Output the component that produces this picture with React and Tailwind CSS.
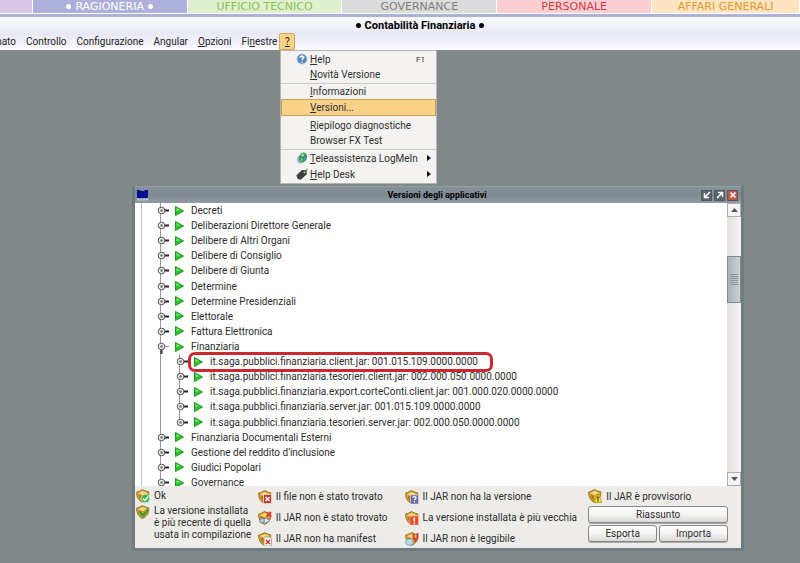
import React from "react";

const tabs = [
  { label: "", style: "grow-[32] bg-[#d9c6e2]" },
  { label: "RAGIONERIA", active: true, style: "grow-[155] bg-[#adb0da] text-white" },
  { label: "UFFICIO TECNICO", style: "grow-[155] bg-[#e0efd0] text-[#8cc152]" },
  { label: "GOVERNANCE", style: "grow-[155] bg-[#dcdcdc] text-[#7c7c7c]" },
  { label: "PERSONALE", style: "grow-[155] bg-[#fbcfd2] text-[#cf3a48]" },
  { label: "AFFARI GENERALI", style: "grow-[148] bg-[#fde4c2] text-[#e39a2d]" },
];

const tree = [
  { label: "Decreti" },
  { label: "Deliberazioni Direttore Generale" },
  { label: "Delibere di Altri Organi" },
  { label: "Delibere di Consiglio" },
  { label: "Delibere di Giunta" },
  { label: "Determine" },
  { label: "Determine Presidenziali" },
  { label: "Elettorale" },
  { label: "Fattura Elettronica" },
  { label: "Finanziaria", open: true },
  { label: "it.saga.pubblici.finanziaria.client.jar: 001.015.109.0000.0000", child: true, marked: true },
  { label: "it.saga.pubblici.finanziaria.tesorieri.client.jar: 002.000.050.0000.0000", child: true },
  { label: "it.saga.pubblici.finanziaria.export.corteConti.client.jar: 001.000.020.0000.0000", child: true },
  { label: "it.saga.pubblici.finanziaria.server.jar: 001.015.109.0000.0000", child: true },
  { label: "it.saga.pubblici.finanziaria.tesorieri.server.jar: 002.000.050.0000.0000", child: true, last: true },
  { label: "Finanziaria Documentali Esterni" },
  { label: "Gestione del reddito d'inclusione" },
  { label: "Giudici Popolari" },
  { label: "Governance" },
];

function Key({ children }) {
  return <span className="underline decoration-1 underline-offset-1">{children}</span>;
}

function Dot() {
  return <span className="size-[5px] rounded-full bg-current" />;
}

function HelpIcon() {
  return (
    <svg className="size-3" viewBox="0 0 12 12" aria-hidden="true">
      <circle cx="6" cy="6" r="5" fill="#4f86c0" stroke="#a9c4e0" />
      <path d="M2.500 4.500a4 4 0 0 1 7 0Q6 5.500 2.500 4.500z" fill="#8db8e2" />
      <path d="M4.400 4.600c0-2.200 3.400-2 3.200 0C7.500 5.800 6 5.600 6 7.200" fill="none" stroke="#fff" strokeWidth="1.300" />
      <circle cx="6" cy="9" r=".8" fill="#fff" />
    </svg>
  );
}

function RemoteIcon() {
  return (
    <svg className="size-3" viewBox="0 0 12 12" aria-hidden="true">
      <ellipse cx="4.500" cy="7.500" rx="3.500" ry="4" fill="#9db6cf" />
      <ellipse cx="7" cy="5.500" rx="4" ry="5" fill="#3c9a56" transform="rotate(20 7 5.500)" />
      <path d="M5 3c1.500-2 3-1.500 3.500-.5L7 5zM4.500 6l2 1-.5 3z" fill="#a8dbb4" />
      <path d="M8.500 4.500l1.500 1-1 3.500-1-1z" fill="#5c8fc4" />
    </svg>
  );
}

function TagIcon() {
  return (
    <svg className="size-3" viewBox="0 0 12 12" aria-hidden="true">
      <path d="M.3 7.500 6 2l4.500.2.300 4L4.800 11.800 1.800 11z" fill="#3d3d3d" />
      <circle cx="8.500" cy="4.300" r=".9" fill="#f3f2ef" />
      <path d="M8.500 4.300 11.500.8" stroke="#555" fill="none" />
    </svg>
  );
}

function Arrow() {
  return (
    <svg className="mr-1 h-[6px] w-1" viewBox="0 0 4 6" aria-hidden="true">
      <path d="M0 0 4 3 0 6z" fill="#111" />
    </svg>
  );
}

function MenuItem({ icon, hint, className = "h-4 border-transparent", children }) {
  return (
    <button role="menuitem" className={"flex w-full items-center border text-left " + className}>
      <span className="flex w-7 justify-end pr-[2px]">{icon}</span>
      <span className="grow">{children}</span>
      {hint}
    </button>
  );
}

function Menu() {
  return (
    <div role="menu" className="absolute left-[280px] top-full z-10 flex w-[157px] flex-col border border-[#b5b5b2] bg-[#f4f3f1] pb-px text-[#2f2f2f]">
      <MenuItem icon={<HelpIcon />} hint={<span className="pr-[10px] text-[8px]">F1</span>}><Key>H</Key>elp</MenuItem>
      <MenuItem className="h-[15px] border-transparent"><Key>N</Key>ovità Versione</MenuItem>
      <hr className="mt-px border-[#c9c9c6]" />
      <MenuItem className="h-[15px] border-transparent"><Key>I</Key>nformazioni</MenuItem>
      <MenuItem className="mb-[2px] h-[17px] border-[#c9a052] bg-[#f9d38a]"><Key>V</Key>ersioni...</MenuItem>
      <MenuItem className="h-[15px] border-transparent"><Key>R</Key>iepilogo diagnostiche</MenuItem>
      <MenuItem className="h-[15px] border-transparent">Browser FX Test</MenuItem>
      <hr className="mt-px border-[#c9c9c6]" />
      <MenuItem icon={<RemoteIcon />} hint={<Arrow />}><Key>T</Key>eleassistenza LogMeIn</MenuItem>
      <MenuItem icon={<TagIcon />} hint={<Arrow />}><Key>H</Key>elp Desk</MenuItem>
    </div>
  );
}

function Handle({ open }) {
  return (
    <svg className="h-[15px] w-3 shrink-0" viewBox="0 0 12 15" aria-hidden="true">
      {open ? <path d="M4.500 8v7" stroke="#333" strokeWidth="2" /> : <path d="M4 7.500h8" stroke="#222" strokeWidth="2" />}
      {open && <path d="M7 7.500h5" stroke="#999" />}
      <circle cx="4.500" cy="7.500" r="3.300" fill="#e8e8e8" stroke="#555" />
      <circle cx="4.500" cy="7.500" r="1.300" fill="#777" />
    </svg>
  );
}

function Play() {
  return (
    <svg className="h-[10px] w-[9px] shrink-0" viewBox="0 0 9 10" aria-hidden="true">
      <path d="M.5.5 8.500 5 .5 9.500z" fill="#2fc02f" stroke="#1f9a1f" />
      <path d="M1.500 2 5 4.200 1.500 5z" fill="#7fe67f" />
    </svg>
  );
}

function TreeRow({ item }) {
  return (
    <li className="relative flex min-h-0 flex-1 items-center whitespace-nowrap">
      <span className="flex w-[15px] shrink-0 justify-end self-stretch">
        <span className="-mr-1 w-px bg-[#9a9a9a]" />
      </span>
      {item.child && (
        <span className="flex w-[19px] shrink-0 justify-end self-stretch">
          <span className={item.last ? "-mr-1 h-2 w-px bg-[#9a9a9a]" : "-mr-1 w-px bg-[#9a9a9a]"} />
        </span>
      )}
      <span className="z-[1] flex items-center">
        <Handle open={item.open} />
        <span className="ml-[6px] mr-[7px] flex"><Play /></span>
        <span>{item.label}</span>
      </span>
      {item.marked && (
        <span className="absolute -top-[2px] left-[46px] z-[2] h-5 w-[305px] rounded-[7px] border-[3px] border-[#cc2830]" />
      )}
    </li>
  );
}

function Badge({ kind }) {
  return (
    <>
      {kind === "ok" && (<><circle cx="9.500" cy="9.500" r="4.300" fill="#3bb54a" stroke="#e4f5e4" strokeWidth=".7" /><path d="M7 9.500l2 2 3.300-4" fill="none" stroke="#fff" strokeWidth="1.500" /></>)}
      {kind === "newer" && <path d="M4 7l3 3.500L12 4.500" fill="none" stroke="#3f9d2f" strokeWidth="2.500" />}
      {kind === "nofile" && (<><rect x="5.500" y="4.500" width="8" height="9" fill="#cf3029" stroke="#fff" strokeWidth=".6" /><path d="M7.500 7l4 4M11.500 7l-4 4" stroke="#fff" strokeWidth="1.600" /></>)}
      {kind === "nojar" && (<><path d="M3 9l4 3.500 5-3-4-2.500z" fill="#e2e6ea" stroke="#74838f" /><circle cx="4" cy="9.500" r="2.500" fill="#b7c8d6" stroke="#65727d" strokeWidth=".8" /><path d="M9 1l4 5M13 1 8.500 5.500" stroke="#e0392c" strokeWidth="1.800" /></>)}
      {kind === "nomanifest" && (<><path d="M6 5h6l1.500 1.500V14H6z" fill="#f3f3f3" stroke="#999" strokeWidth=".7" /><path d="M8 8l4 4M12 8l-4 4" stroke="#d5382b" strokeWidth="1.500" /></>)}
      {kind === "unknown" && (<><rect x="5.500" y="5" width="8" height="9" fill="#6a6cab" stroke="#d9daf0" strokeWidth=".6" /><path d="M8 7.800c0-1.700 3.200-1.500 3 .2-.1 1-1.500.9-1.500 2.200M9.500 11.300v1.200" fill="none" stroke="#fff" strokeWidth="1.200" /></>)}
      {kind === "older" && (<><rect x="5" y="5" width="8.500" height="9" fill="#ea4a25" stroke="#f9c5b5" strokeWidth=".6" /><path d="M9.300 6.500v4M9.300 11.500v1.500" stroke="#fff" strokeWidth="1.600" /></>)}
      {kind === "unreadable" && (<><rect x="1" y="7" width="7" height="6" rx="2" fill="#b9dcea" stroke="#6b98ad" strokeWidth=".8" /><path d="M8.500 1v4.500c0 2 4 2 4 0V1M10.500 7v3" fill="none" stroke="#d8362b" strokeWidth="1.700" /></>)}
      {kind === "draft" && (<><path d="M10 4.500l4 9H6z" fill="#f6e01e" stroke="#a98f10" strokeWidth=".7" /><path d="M10 7.500v3M10 11.300v1.200" stroke="#222" strokeWidth="1.200" /></>)}
    </>
  );
}

function Jar({ kind }) {
  return (
    <svg className="size-[14px] shrink-0" viewBox="0 0 14 14" aria-hidden="true">
      <path d="M.7 3C3 2.800 4.500 1.500 6.500.6c2 .9 4 2 6.300 2.300.3 4.800-1.500 8.500-6.300 10.500C2.500 11.700.5 8 .7 3z" fill="#d9a437" stroke="#93661a" strokeWidth=".9" />
      <path d="M2.300 4.200 6.500 2 11.300 4 6.500 6z" fill="#f6d984" />
      <path d="M2.600 5.200l3.200 1.300v5c-2-1-3.200-3-3.200-6.300z" fill="#b07c22" />
      <Badge kind={kind} />
    </svg>
  );
}

function Legend({ kind, children }) {
  return (
    <div className="flex h-[21px] items-center gap-1 whitespace-nowrap">
      <Jar kind={kind} />
      <span>{children}</span>
    </div>
  );
}

const winButton = "flex size-[11px] items-center justify-center border border-[#4f5a60] text-white";
const pushButton = "flex h-[17px] items-center justify-center rounded-[3px] border border-[#85878a] bg-linear-to-b from-white via-[#f6f5f3] to-[#d9d8d5] shadow-[0_1px_0_#aaa]";
const scrollButton = "flex h-[14px] items-center justify-center border border-[#a9adaf] bg-[#f6f5f3]";

function VersionWindow() {
  return (
    <section className="absolute left-[132px] top-[186px] w-[612px] border-x-[3px] border-b-[3px] border-[#6f7d83] bg-[#edece9] text-[#2c2c2c]">
      <header className="flex h-[17px] items-center border-t border-[#95a0a6] bg-linear-to-b from-[#87929a] via-[#7f8b91] to-[#919ca2] pl-[2px] pr-[3px]">
        <svg className="h-3 w-[11px]" viewBox="0 0 11 12" aria-hidden="true">
          <path d="M0 1h3l1 1h3l1-1h3v8H0z" fill="#08108c" />
          <path d="M0 10.500h11" stroke="#c7cbe8" strokeWidth="2" strokeDasharray="2 1" />
        </svg>
        <h2 className="grow pl-[25px] text-center text-[9px] font-bold text-black">Versioni degli applicativi</h2>
        <div className="flex gap-[2px]">
          <button aria-label="Riduci" className={winButton + " bg-[#59646b]"}>
            <svg className="size-2" viewBox="0 0 8 8"><path d="M7 1 2 6M1.500 2v4.500H6" fill="none" stroke="currentColor" strokeWidth="1.500" /></svg>
          </button>
          <button aria-label="Ingrandisci" className={winButton + " bg-[#59646b]"}>
            <svg className="size-2" viewBox="0 0 8 8"><path d="M1 7 6 2M2 1.500h4.500V6" fill="none" stroke="currentColor" strokeWidth="1.500" /></svg>
          </button>
          <button aria-label="Chiudi" className={winButton + " bg-[#c0573f]"}>
            <svg className="size-2" viewBox="0 0 8 8"><path d="M1.500 1.500l5 5M6.500 1.500l-5 5" stroke="currentColor" strokeWidth="1.700" /></svg>
          </button>
        </div>
      </header>
      <div className="flex h-[283px] bg-white">
        <div className="flex grow overflow-hidden pl-[6px]">
          <ul className="flex h-[287px] grow flex-col border-l border-[#c0c0c0]">
            {tree.map((item) => (
              <TreeRow key={item.label} item={item} />
            ))}
          </ul>
        </div>
        <div className="flex w-[14px] flex-col bg-linear-to-r from-[#e2e1de] to-[#f6f5f3]">
          <button aria-label="Su" className={scrollButton}>
            <svg className="h-1 w-[7px]" viewBox="0 0 7 4"><path d="M0 4 3.500 0 7 4z" fill="#555" /></svg>
          </button>
          <div className="mt-[39px] flex h-[47px] flex-col items-center justify-center gap-px border border-[#7c898f] bg-linear-to-r from-[#a9b4ba] to-[#c8d1d6]">
            {[0, 1, 2, 3, 4, 5].map((n) => (
              <i key={n} className="h-px w-2 border-t border-[#8997a0]" />
            ))}
          </div>
          <button aria-label="Giù" className={scrollButton + " mt-auto"}>
            <svg className="h-1 w-[7px]" viewBox="0 0 7 4"><path d="M0 0 3.500 4 7 0z" fill="#555" /></svg>
          </button>
        </div>
      </div>
      <footer className="grid h-[62px] grid-cols-[122fr_147fr_184fr_153fr] pl-px">
        <div className="flex flex-col">
          <div className="flex h-[19px] items-center gap-1"><Jar kind="ok" /><span>Ok</span></div>
          <div className="flex gap-1 leading-3">
            <Jar kind="newer" />
            <span className="whitespace-nowrap">La versione installata<br />è più recente di quella<br />usata in compilazione</span>
          </div>
        </div>
        <div>
          <Legend kind="nofile">Il file non è stato trovato</Legend>
          <Legend kind="nojar">Il JAR non è stato trovato</Legend>
          <Legend kind="nomanifest">Il JAR non ha manifest</Legend>
        </div>
        <div>
          <Legend kind="unknown">Il JAR non ha la versione</Legend>
          <Legend kind="older">La versione installata è più vecchia</Legend>
          <Legend kind="unreadable">Il JAR non è leggibile</Legend>
        </div>
        <div className="pr-[13px]">
          <div className="flex h-5 items-center gap-1"><Jar kind="draft" /><span>Il JAR è provvisorio</span></div>
          <div className="grid grid-cols-2 gap-[2px]">
            <button className={pushButton + " col-span-2"}>Riassunto</button>
            <button className={pushButton}>Esporta</button>
            <button className={pushButton}>Importa</button>
          </div>
        </div>
      </footer>
    </section>
  );
}

export default function App() {
  return (
    <main className="relative min-h-screen overflow-hidden bg-[#808888] font-[Roboto,sans-serif] text-[10px] leading-[15px]">
      <nav className="flex h-[17px] border-b-[3px] border-[#abb2d8] bg-white font-['DejaVu_Sans',sans-serif] text-[11px]">
        {tabs.map((tab) => (
          <a key={tab.label} href="#" className={"flex h-[13px] basis-0 items-center justify-center gap-1 border-r border-white whitespace-nowrap leading-[11px] " + tab.style}>
            {tab.active && <Dot />}
            {tab.label}
            {tab.active && <Dot />}
          </a>
        ))}
      </nav>
      <header className="relative bg-linear-to-b from-[#fbfbff] via-[#e9e9f5] to-[#fafaff]">
        <h1 className="flex h-4 items-center justify-center gap-1 pl-10 text-[11px] font-bold text-black"><Dot />Contabilità Finanziaria<Dot /></h1>
        <div role="menubar" className="flex h-[17px] items-center gap-[10px] overflow-hidden text-[#222]">
          <button className="flex w-4 justify-end">nato</button>
          <button>Controllo</button>
          <button>Configurazione</button>
          <button>Angular</button>
          <button><Key>O</Key>pzioni</button>
          <button>Fi<Key>n</Key>estre</button>
          <button className="-ml-2 h-[17px] w-4 rounded-t-[2px] border border-[#d0a95a] bg-[#f9d38a]"><Key>?</Key></button>
        </div>
        <Menu />
      </header>
      <VersionWindow />
    </main>
  );
}
